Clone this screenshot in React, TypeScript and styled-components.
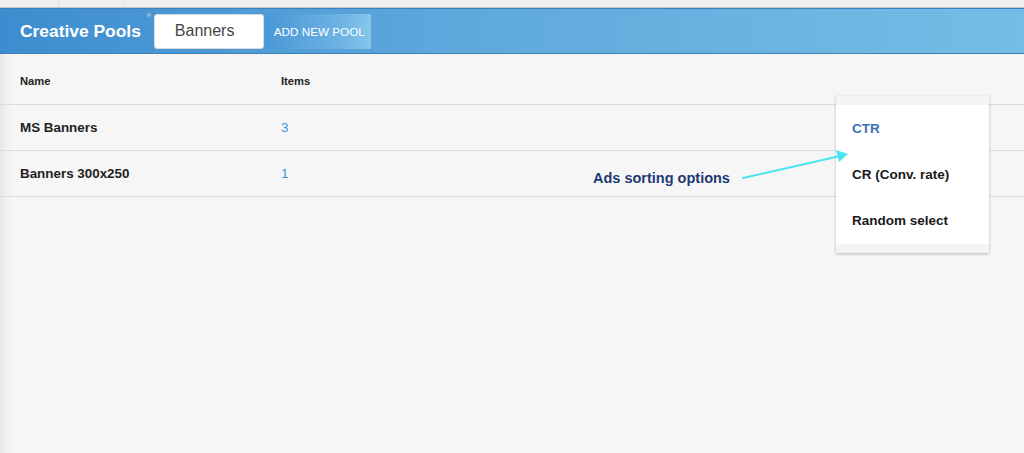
import { FC } from 'react';
import styled, { createGlobalStyle } from 'styled-components';

const GlobalStyle = createGlobalStyle`
  html, body {
    margin: 0;
    padding: 0;
    background: #f6f6f6;
    font-family: "Liberation Sans", Arial, sans-serif;
  }
`;

const Page = styled.div`
  position: relative;
  width: 1024px;
  height: 453px;
  overflow: hidden;
  background: #f6f6f6;
`;

const TopStrip = styled.div`
  display: flex;
  height: 7px;
  background: #efefef;
  border-bottom: 1px solid #c9c9c9;
`;

const StripCell = styled.div<{ $w: number }>`
  width: ${({ $w }) => $w}px;
  border-right: 1px solid #e2e2e2;
`;

const Header = styled.header`
  display: flex;
  align-items: center;
  height: 44px;
  padding: 0 0 0 20px;
  background: linear-gradient(90deg, #3d8ccf 0%, #5ea9dc 45%, #75bde6 100%);
  border-top: 1px solid #3a80bd;
  border-bottom: 1px solid #3f7fb4;
`;

const Title = styled.h1`
  margin: 0 13px 0 0;
  position: relative;
  color: #fff;
  font-size: 17.4px;
  font-weight: bold;

  &::after {
    content: '';
    position: absolute;
    right: -10px;
    top: -8px;
    width: 4px;
    height: 4px;
    border-radius: 50%;
    background: #8fb1cc;
  }
`;

const PoolInput = styled.input.attrs({ defaultValue: 'Banners' })`
  width: 110px;
  height: 35px;
  box-sizing: border-box;
  border: 1px solid #d9d9d9;
  border-radius: 3px;
  padding: 0 0 0 20px;
  font-family: "Liberation Sans", Arial, sans-serif;
  font-size: 16px;
  color: #444;
  background: #fff;
  outline: none;
`;

const AddButton = styled.button`
  height: 35px;
  margin-left: 2px;
  padding: 0 6px 0 8px;
  border: 0;
  border-radius: 1px;
  background: linear-gradient(90deg, #4a98d6 0%, #6cb3e3 70%, #86c6eb 100%);
  color: #fff;
  font-family: "Liberation Sans", Arial, sans-serif;
  font-size: 11.7px;
  cursor: pointer;
`;

const Table = styled.div`
  box-shadow: inset 14px 0 10px -10px #e4e4e4;
`;

const Row = styled.div<{ $h: number }>`
  display: grid;
  grid-template-columns: 261px 1fr;
  align-items: center;
  height: ${({ $h }) => $h}px;
  padding-left: 20px;
  border-bottom: 1px solid #dcdcdc;
`;

const HeadCell = styled.div`
  font-size: 11.2px;
  font-weight: bold;
  color: #222;
  padding-top: 4px;
`;

const NameCell = styled.div`
  font-size: 13.4px;
  font-weight: bold;
  color: #222;
`;

const CountCell = styled.div`
  font-size: 13.4px;
  color: #4295d6;
`;

const Filler = styled.div`
  height: 260px;
  box-shadow: inset 14px 0 10px -10px #e4e4e4;
`;

const Menu = styled.ul`
  position: absolute;
  left: 836px;
  top: 96px;
  width: 153px;
  margin: 0;
  padding: 9px 0 9px;
  list-style: none;
  background: #f4f4f4;
  box-shadow: 0 1px 3px rgba(0, 0, 0, 0.25);
`;

const MenuBody = styled.div`
  background: #fff;
  padding: 0 0 1px;
`;

const MenuItem = styled.li<{ $active?: boolean }>`
  box-sizing: border-box;
  height: 46px;
  display: flex;
  align-items: center;
  padding: 1px 0 0 16px;
  font-size: 13.5px;
  font-weight: bold;
  color: ${({ $active }) => ($active ? '#3a72b4' : '#1a1a1a')};
`;

const Note = styled.div`
  position: absolute;
  left: 593px;
  top: 170px;
  font-size: 14.5px;
  font-weight: bold;
  color: #1e3a72;
`;

const Arrow = styled.svg`
  position: absolute;
  left: 740px;
  top: 148px;
`;

const rows = [
  { name: 'MS Banners', items: 3 },
  { name: 'Banners 300x250', items: 1 },
];

const App: FC = () => {
  return (
    <Page>
      <GlobalStyle />
      <TopStrip>
        <StripCell $w={58} />
        <StripCell $w={64} />
      </TopStrip>
      <Header>
        <Title>Creative Pools</Title>
        <PoolInput />
        <AddButton>ADD NEW POOL</AddButton>
      </Header>
      <Table>
        <Row $h={50}>
          <HeadCell>Name</HeadCell>
          <HeadCell>Items</HeadCell>
        </Row>
        {rows.map((r) => (
          <Row key={r.name} $h={45}>
            <NameCell>{r.name}</NameCell>
            <CountCell>{r.items}</CountCell>
          </Row>
        ))}
      </Table>
      <Filler />
      <Menu>
        <MenuBody>
          <MenuItem $active>CTR</MenuItem>
          <MenuItem>CR (Conv. rate)</MenuItem>
          <MenuItem>Random select</MenuItem>
        </MenuBody>
      </Menu>
      <Note>Ads sorting options</Note>
      <Arrow width="112" height="36" viewBox="0 0 112 36">
        <line x1="3" y1="30" x2="100" y2="8" stroke="#4ae3f2" strokeWidth="2" strokeLinecap="round" />
        <polygon points="108,6 96,2 99,14" fill="#4ae3f2" />
      </Arrow>
    </Page>
  );
};

export default App;
